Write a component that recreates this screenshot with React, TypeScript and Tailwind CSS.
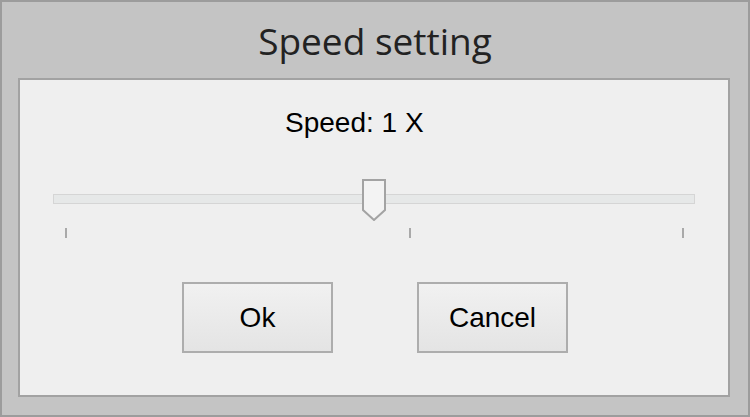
export default function App() {
  const labelFont = { fontFamily: '"Liberation Sans", Arial, sans-serif' };

  return (
    <div className="w-[750px] h-[417px] bg-[#c4c4c4] border-2 border-[#9c9c9c] flex flex-col">
      {/* barra de título */}
      <div className="h-[76px] flex items-center justify-center">
        <h1
          className="text-[37px] leading-none text-[#222] font-normal mt-[1px]"
          style={{ fontFamily: '"Open Sans", "Noto Sans", sans-serif' }}
        >
          Speed setting
        </h1>
      </div>

      {/* painel */}
      <div className="ml-[16px] mr-[18px] h-[319px] border-2 border-[#a2a2a2] bg-[#efefef] flex flex-col">
        <p
          className="mt-[27px] ml-[265px] h-[32px] leading-[32px] text-[28px] text-black"
          style={labelFont}
        >
          Speed: 1 X
        </p>

        {/* slider */}
        <div className="relative mt-[37px] h-[64px]">
          <div className="mt-[18px] ml-[33px] mr-[33px] h-[10px] border border-[#d5d5d5] bg-[#e6e8e8]" />
          <div className="mt-[24px] flex">
            <span className="ml-[45px] w-[2px] h-[10px] bg-[#a9a9a9]" />
            <span className="ml-[342px] w-[2px] h-[10px] bg-[#a9a9a9]" />
            <span className="ml-[271px] w-[2px] h-[10px] bg-[#a9a9a9]" />
          </div>
          <svg
            className="absolute left-[342px] top-[3px]"
            width="24"
            height="42"
            viewBox="0 0 24 42"
          >
            <path
              d="M1 1 H23 V31 L12 41 L1 31 Z"
              fill="#f3f3f3"
              stroke="#a3a3a3"
              strokeWidth="2"
            />
          </svg>
        </div>

        {/* botões */}
        <div className="mt-[42px] ml-[162px] flex gap-[84px]">
          {["Ok", "Cancel"].map((t) => (
            <button
              key={t}
              className="w-[151px] h-[71px] border-2 border-[#adadad] bg-gradient-to-b from-[#f1f1f1] to-[#e4e4e4] text-[28px] text-black flex items-center justify-center"
              style={labelFont}
            >
              {t}
            </button>
          ))}
        </div>
      </div>
    </div>
  );
}
